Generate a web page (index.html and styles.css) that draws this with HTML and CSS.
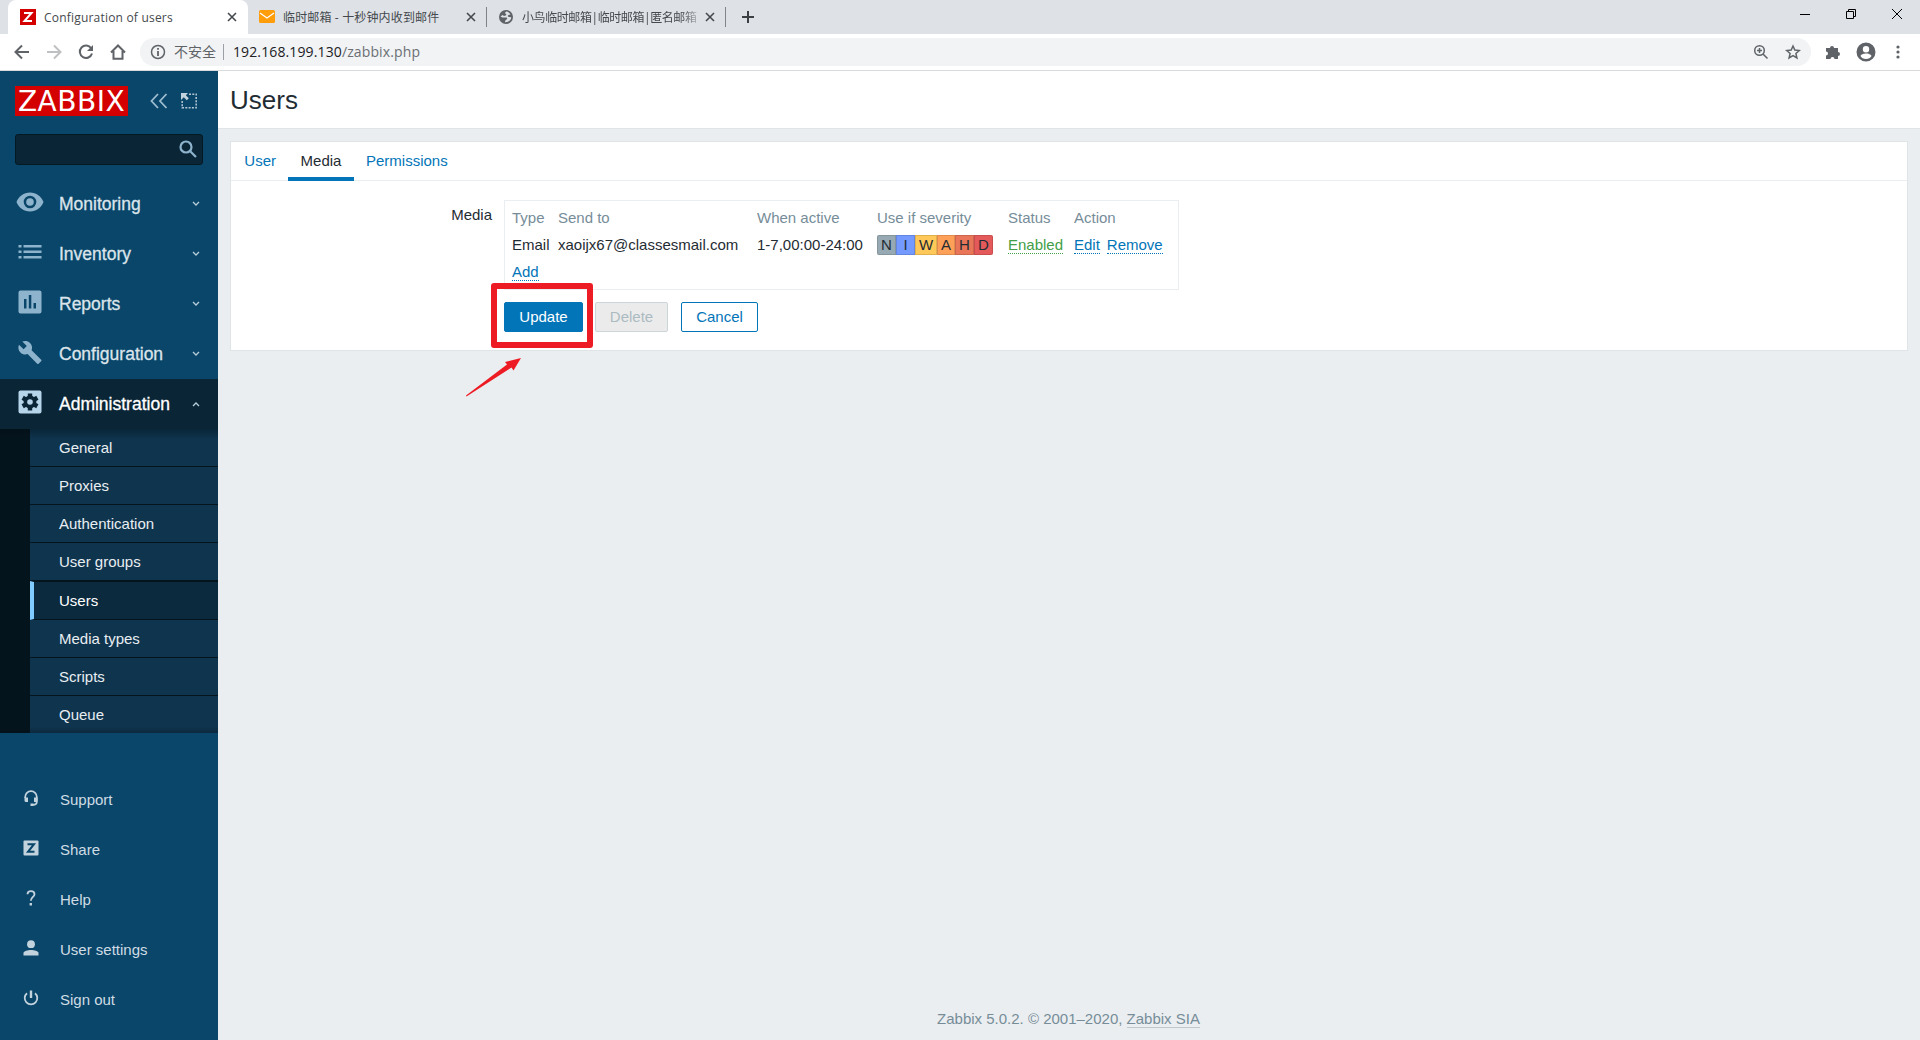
FILE: index.html
```html
<!DOCTYPE html>
<html lang="en">
<head>
    <meta charset="UTF-8">
    <title>Configuration of users</title>
    <link rel="stylesheet" href="styles.css">
</head>
<body>

    <!-- Browser tabs -->
    <div class="tabstrip">
        <div class="tab active">
            <svg class="favicon" width="16" height="16" viewBox="0 0 16 16"><path fill="#d40000" d="M0 0h16v16H0z"/><path fill="none" stroke="#fff" stroke-width="2" d="M4 4h7.5L4.5 12H12"/></svg>
            <span class="tab-title first-title">Configuration of users</span>
            <svg class="close" width="10" height="10" viewBox="0 0 10 10"><path d="M1 1l8 8M9 1L1 9"/></svg>
        </div>
        <div class="tab second">
            <svg class="favicon" width="16" height="16" viewBox="0 0 16 16"><rect y="1" width="16" height="13" rx="1.5" fill="#ff9d0a"/><path fill="none" stroke="#fff" stroke-width="1.3" d="M1 4l7 5 7-5"/></svg>
            <span class="tab-title second-title">临时邮箱 - 十秒钟内收到邮件</span>
            <svg class="close" width="10" height="10" viewBox="0 0 10 10"><path d="M1 1l8 8M9 1L1 9"/></svg>
        </div>
        <div class="tab third">
            <svg class="favicon" width="16" height="16" viewBox="0 0 16 16"><circle cx="8" cy="8" r="7" fill="#5f6368"/><path fill="#dee1e6" d="M8.500 2.500C7 3 6.500 4.500 8 5c1.200.5-.5 2-2 2L4.500 6 2.500 7.500C3.500 8.500 5 8.500 6 8.500h2c1.500 0 1.500 1.500.5 2s-1.500 1-1.500 2.800c3.500.2 6-2 6.300-5L11 8C9.500 8 9.500 6.500 10.500 6l2-.5C11.500 3.800 10.200 2.800 8.500 2.500z"/></svg>
            <span class="tab-title faded">小鸟临时邮箱|临时邮箱|匿名邮箱</span>
            <svg class="close" width="10" height="10" viewBox="0 0 10 10"><path d="M1 1l8 8M9 1L1 9"/></svg>
        </div>
        <svg class="new-tab" width="12" height="12" viewBox="0 0 12 12"><path d="M6 0v12M0 6h12"/></svg>
        <div class="window-buttons">
            <svg width="12" height="12" viewBox="0 0 12 12"><path d="M1 6.500h10"/></svg>
            <svg width="12" height="12" viewBox="0 0 12 12"><path d="M1.500 3.500h7v7h-7zM3.500 3.500v-2h7v7h-2"/></svg>
            <svg width="12" height="12" viewBox="0 0 12 12"><path d="M1 1l10 10M11 1L1 11"/></svg>
        </div>
    </div>

    <!-- Browser toolbar -->
    <div class="toolbar">
        <svg width="16" height="16" viewBox="0 0 16 16"><path class="line" d="M15 8H2M8 1.500L1.500 8 8 14.500"/></svg>
        <svg class="disabled" width="16" height="16" viewBox="0 0 16 16"><path class="line" d="M1 8h13M8 1.500L14.500 8 8 14.500"/></svg>
        <svg width="16" height="16" viewBox="0 0 16 16"><path class="line" d="M13.200 4.300A6.200 6.200 0 1 0 14 9.500"/><path d="M15 1v6H9z"/></svg>
        <svg width="16" height="16" viewBox="0 0 16 16"><path class="line" d="M1 8.500L8 1.500l7 7M3.500 7v7.800h9V7"/></svg>
        <div class="address">
            <svg width="16" height="16" viewBox="0 0 16 16"><circle class="thin" cx="8" cy="8" r="6.500"/><path d="M7.100 7h1.800v5H7.100zM7.100 4h1.800v1.800H7.100z"/></svg>
            <span class="insecure">不安全</span>
            <span class="url">192.168.199.130<i>/zabbix.php</i></span>
            <svg class="magnify" width="16" height="16" viewBox="0 0 16 16"><circle class="thin" cx="6.500" cy="6.500" r="4.800"/><path class="thin" d="M10 10l4.500 4.500M4 6.500h5M6.500 4v5"/></svg>
            <svg width="16" height="16" viewBox="0 0 16 16"><path class="thin" d="M8 2l1.800 4.100 4.500.4-3.400 3 1 4.400L8 11.600l-3.900 2.300 1-4.400-3.400-3 4.500-.4z"/></svg>
        </div>
        <svg class="puzzle" width="16" height="16" viewBox="0 0 16 16"><path d="M1 4h4a2 2 0 1 1 4 0h4v4a2 2 0 1 1 0 4v3H9.500a2 2 0 0 0-4 0H1v-3.500a2 2 0 0 0 0-4z"/></svg>
        <svg class="profile" width="20" height="20" viewBox="0 0 20 20"><path fill-rule="evenodd" d="M10 .5a9.500 9.500 0 1 0 0 19 9.500 9.500 0 0 0 0-19zm0 3.500a3.200 3.200 0 1 1 0 6.400A3.200 3.200 0 0 1 10 4zm0 13c-2.500 0-4.500-1.200-5.500-3 .3-1.800 3.500-2.600 5.500-2.600s5.200.8 5.500 2.600c-1 1.800-3 3-5.500 3z"/></svg>
        <svg width="16" height="16" viewBox="0 0 16 16"><circle cx="8" cy="3" r="1.600"/><circle cx="8" cy="8" r="1.600"/><circle cx="8" cy="13" r="1.600"/></svg>
    </div>

    <div class="page">

        <!-- Sidebar -->
        <aside class="sidebar">
            <div class="sidebar-header">
                <div class="logo">ZABBIX</div>
                <svg class="collapse" width="18" height="16" viewBox="0 0 18 16"><path d="M8 1L1.500 8 8 15M16.500 1L10 8l6.500 7"/></svg>
                <svg class="kiosk" width="16" height="16" viewBox="0 0 16 16"><path class="dots" d="M8 1.200h7.200v13.600H1.200V8"/><path class="arrow" d="M0 0h7L4.800 2.200l3 3-2 2-3-3L0 7z"/></svg>
            </div>
            <div class="search">
                <svg width="18" height="18" viewBox="0 0 18 18"><circle cx="7" cy="7" r="5.500"/><path d="M11 11l6 6"/></svg>
            </div>
            <ul class="menu">
                <li>
                    <svg class="icon" width="28" height="28" viewBox="0 0 28 28"><path fill-rule="evenodd" d="M14 4.500C7.800 4.500 2.500 8.400.5 14c2 5.600 7.300 9.500 13.500 9.500S25.500 19.600 27.500 14C25.500 8.400 20.200 4.500 14 4.500zm0 3.200a6.300 6.300 0 1 1 0 12.600 6.300 6.300 0 0 1 0-12.600z"/><circle cx="14" cy="14" r="3.800"/></svg>
                    <span>Monitoring</span>
                    <svg class="caret" width="8" height="6" viewBox="0 0 8 6"><path d="M1 1l3 3 3-3"/></svg>
                </li>
                <li>
                    <svg class="icon" width="28" height="28" viewBox="0 0 28 28"><path d="M2.500 7h3v2.500h-3zM7.500 7h18v2.500h-18zM2.500 12.500h3V15h-3zM7.500 12.500h18V15h-18zM2.500 18h3v2.500h-3zM7.500 18h18v2.500h-18z"/></svg>
                    <span>Inventory</span>
                    <svg class="caret" width="8" height="6" viewBox="0 0 8 6"><path d="M1 1l3 3 3-3"/></svg>
                </li>
                <li>
                    <svg class="icon" width="28" height="28" viewBox="0 0 28 28"><path fill-rule="evenodd" d="M4.500 2.500h19a2 2 0 0 1 2 2v19a2 2 0 0 1-2 2h-19a2 2 0 0 1-2-2v-19a2 2 0 0 1 2-2zM8 11v9.500h2.500V11zM12.800 7v13.500h2.500V7zM17.500 15v5.500H20V15z"/></svg>
                    <span>Reports</span>
                    <svg class="caret" width="8" height="6" viewBox="0 0 8 6"><path d="M1 1l3 3 3-3"/></svg>
                </li>
                <li>
                    <svg class="icon" width="28" height="28" viewBox="0 0 28 28"><path d="M25.200 21.800l-9.600-9.600c1-2.400.4-5.300-1.600-7.200C11.900 2.900 8.800 2.500 6.300 3.600l4.500 4.500-3.200 3.200-4.600-4.500C1.800 9.300 2.300 12.400 4.400 14.500c2 2 4.800 2.500 7.200 1.600l9.600 9.600c.4.400 1 .4 1.400 0l2.500-2.400c.5-.4.500-1.100.1-1.500z"/></svg>
                    <span>Configuration</span>
                    <svg class="caret" width="8" height="6" viewBox="0 0 8 6"><path d="M1 1l3 3 3-3"/></svg>
                </li>
                <li class="open">
                    <svg class="icon" width="28" height="28" viewBox="0 0 28 28"><rect x="2.500" y="2.500" width="23" height="23" rx="2"/><g class="gear"><path d="M11.800 5.500h4.400v17h-4.400z"/><path d="M11.800 5.500h4.400v17h-4.400z" transform="rotate(60 14 14)"/><path d="M11.800 5.500h4.400v17h-4.400z" transform="rotate(120 14 14)"/><circle cx="14" cy="14" r="6.400"/></g><circle cx="14" cy="14" r="2.800"/></svg>
                    <span>Administration</span>
                    <svg class="caret" width="8" height="6" viewBox="0 0 8 6"><path d="M1 5l3-3 3 3"/></svg>
                </li>
            </ul>
            <ul class="submenu">
                <li>General</li>
                <li>Proxies</li>
                <li>Authentication</li>
                <li>User groups</li>
                <li class="selected">Users</li>
                <li>Media types</li>
                <li>Scripts</li>
                <li>Queue</li>
            </ul>
            <ul class="user-menu">
                <li>
                    <svg width="16" height="16" viewBox="0 0 16 16"><path class="stroke" d="M2.200 8V7a5.800 5.800 0 0 1 11.600 0v5c0 2-1.500 2.800-4 2.800"/><path d="M1.500 7.500H5V12H3a1.500 1.500 0 0 1-1.500-1.500zM11 7.500h3.500v3A1.500 1.500 0 0 1 13 12h-2zM7.500 13.500h3V16h-3z"/></svg>
                    <span>Support</span>
                </li>
                <li>
                    <svg width="16" height="16" viewBox="0 0 16 16"><rect x=".5" y=".5" width="15" height="15" rx="1"/><path class="zed" d="M4.500 4.200H11L5 11.800h6.500"/></svg>
                    <span>Share</span>
                </li>
                <li>
                    <svg width="16" height="16" viewBox="0 0 16 16"><path class="stroke" d="M4.500 4.200C4.500 2.200 6 1.200 8 1.200s3.500 1.200 3.500 3c0 2.600-3.700 3-3.700 6.600"/><path d="M6.600 13h2.400v2.500H6.600z"/></svg>
                    <span>Help</span>
                </li>
                <li>
                    <svg width="16" height="16" viewBox="0 0 16 16"><circle cx="8" cy="4.200" r="3.900"/><path d="M.5 15.500V13c0-2 4.500-3 7.500-3s7.500 1 7.500 3v2.500z"/></svg>
                    <span>User settings</span>
                </li>
                <li>
                    <svg width="16" height="16" viewBox="0 0 16 16"><path class="stroke" d="M4 3.200a6.300 6.300 0 1 0 8 0"/><path d="M6.800.5h2.400v7.500H6.800z"/></svg>
                    <span>Sign out</span>
                </li>
            </ul>
        </aside>

        <!-- Content -->
        <main>
            <header>
                <h1>Users</h1>
            </header>
            <div class="card">
                <nav>
                    <a>User</a>
                    <a class="current">Media</a>
                    <a>Permissions</a>
                </nav>
                <div class="form-row">
                    <label>Media</label>
                    <div class="media-box">
                        <table>
                            <tr>
                                <th class="col-type">Type</th>
                                <th class="col-sendto">Send to</th>
                                <th class="col-when">When active</th>
                                <th class="col-severity">Use if severity</th>
                                <th class="col-status">Status</th>
                                <th>Action</th>
                            </tr>
                            <tr>
                                <td>Email</td>
                                <td>xaoijx67@classesmail.com</td>
                                <td>1-7,00:00-24:00</td>
                                <td><div class="severity"><span class="na">N</span><span class="info">I</span><span class="warning">W</span><span class="average">A</span><span class="high">H</span><span class="disaster">D</span></div></td>
                                <td><a class="link green">Enabled</a></td>
                                <td><a class="link edit">Edit</a><a class="link">Remove</a></td>
                            </tr>
                            <tr>
                                <td colspan="6"><a class="link">Add</a></td>
                            </tr>
                        </table>
                    </div>
                </div>
                <div class="buttons">
                    <div class="update-wrap">
                        <button class="update">Update</button>
                        <div class="highlight"></div>
                        <svg class="pointer" width="58" height="40" viewBox="0 0 58 40"><path d="M1 38.500L42 7.500l-2-2.500L56 1 48.500 13.500l-2-3L1.500 39.500z"/></svg>
                    </div>
                    <button class="delete" disabled>Delete</button>
                    <button class="cancel">Cancel</button>
                </div>
            </div>
            <footer>
                Zabbix 5.0.2. © 2001–2020, <a>Zabbix SIA</a>
            </footer>
        </main>
    </div>

</body>
</html>
```
FILE: styles.css
```css
* {
    box-sizing: border-box;
}

body {
    margin: 0;
    height: 1040px;
    overflow: hidden;
    font-family: "Liberation Sans", Arial, sans-serif;
    font-size: 15px;
    color: #1f2c33;
}

svg {
    display: block;
    flex: none;
}

ul {
    list-style: none;
    margin: 0;
    padding: 0;
}

/* Browser tabs */
.tabstrip {
    display: flex;
    height: 34px;
    padding-left: 8px;
    background: #dee1e6;
    font-family: "Open Sans", "Noto Sans CJK SC", sans-serif;
    font-size: 12px;
    color: #45494d;
}

.tab {
    display: flex;
    align-items: center;
    height: 34px;
}

.tab.active {
    width: 240px;
    padding: 0 11px 0 12px;
    background: #fff;
    border-radius: 8px 8px 0 0;
}

.tab.second {
    width: 239px;
    padding: 0 11px;
}

.tab.third {
    width: 239px;
    padding: 0 11px;
}

.tab.second,
.tab.third {
    background: linear-gradient(#808387, #808387) right center / 1px 20px no-repeat;
}

.favicon {
    margin-right: 8px;
}

.tab-title {
    flex: 1;
    padding-top: 2px;
    white-space: nowrap;
    line-height: 20px;
}

.first-title {
    letter-spacing: 0.2px;
}

.second-title {
    letter-spacing: 0.15px;
}

.faded {
    margin-right: 8px;
    letter-spacing: -0.42px;
    -webkit-mask-image: linear-gradient(to right, #000 91%, rgba(0, 0, 0, 0.3));
    mask-image: linear-gradient(to right, #000 91%, rgba(0, 0, 0, 0.3));
}

.close,
.new-tab {
    fill: none;
    stroke: #45494d;
    stroke-width: 1.6;
}

.new-tab {
    margin: 11px 0 0 16px;
    stroke: #3c4043;
    stroke-width: 2;
}

.window-buttons {
    display: flex;
    gap: 34px;
    margin: 8px 17px 0 auto;
    fill: none;
    stroke: #000;
}

/* Browser toolbar */
.toolbar {
    display: flex;
    align-items: center;
    height: 37px;
    padding: 0 14px;
    background: #fff;
    border-bottom: 1px solid #d9dadc;
    fill: #5f6368;
}

.toolbar > svg {
    margin-right: 16px;
}

.toolbar > svg:last-child {
    margin-right: 0;
}

.toolbar .line {
    fill: none;
    stroke: #5f6368;
    stroke-width: 2;
}

.toolbar .thin {
    fill: none;
    stroke: #5f6368;
    stroke-width: 1.5;
}

.toolbar .disabled {
    opacity: 0.4;
}

.toolbar .address {
    display: flex;
    flex: 1;
    align-items: center;
    height: 28px;
    margin: 0 14px 0 -2px;
    padding: 0 10px;
    background: #f1f3f4;
    border-radius: 14px;
    font-family: "Open Sans", "Noto Sans CJK SC", sans-serif;
    font-size: 14px;
}

.insecure {
    margin-left: 8px;
    padding-right: 7px;
    border-right: 1px solid #9aa0a6;
    line-height: 16px;
    color: #5f6368;
}

.url {
    margin-left: 9px;
    padding-bottom: 1px;
    letter-spacing: 0.12px;
    color: #202124;
}

.url i {
    font-style: normal;
    color: #6b6f74;
}

.magnify {
    margin: 0 16px 0 auto;
}

.toolbar .puzzle {
    margin-right: 15px;
}

.toolbar .profile {
    margin-right: 14px;
}

.page {
    display: flex;
    height: 969px;
}

/* Sidebar */
.sidebar {
    width: 218px;
    background: #0a466a;
    color: #dbe4ea;
}

.sidebar-header {
    display: flex;
    align-items: center;
    height: 30px;
    margin: 15px 15px 0;
}

.logo {
    width: 113px;
    height: 30px;
    background: #d40000;
    color: #fff;
    font-family: "DejaVu Sans", sans-serif;
    font-size: 28px;
    line-height: 31px;
    letter-spacing: 0.5px;
    text-align: center;
}

.collapse {
    margin-left: 22px;
    fill: none;
    stroke: #9dbdd0;
    stroke-width: 1.8;
}

.kiosk {
    margin-left: 13px;
}

.kiosk .dots {
    fill: none;
    stroke: #b5cad6;
    stroke-width: 1.5;
    stroke-dasharray: 2 1.300;
}

.kiosk .arrow {
    fill: #c3d3dd;
}

.search {
    display: flex;
    justify-content: flex-end;
    width: 188px;
    height: 31px;
    margin: 18px 15px 14px;
    padding: 5px 5px 0 0;
    background: #0a2536;
    border: 1px solid #051923;
    border-radius: 3px;
}

.search svg {
    fill: none;
    stroke: #8eb3cc;
    stroke-width: 2.2;
}

.menu li {
    display: flex;
    align-items: center;
    height: 50px;
    padding: 0 18px 0 15.5px;
    font-size: 17.5px;
    -webkit-text-stroke: 0.3px currentColor;
}

.menu .icon {
    margin: -4px 15.5px 0 0;
    fill: #8eb3cc;
}

.menu .caret {
    margin: 0 0 0 auto;
    fill: none;
    stroke: #b9cedb;
    stroke-width: 1.3;
}

.menu .open {
    background: #0a2536;
    color: #fff;
}

.menu .open .icon {
    fill: #b6d5ea;
}

.menu .gear {
    fill: #0a2536;
}

.submenu {
    height: 304px;
    padding-left: 30px;
    background:
        linear-gradient(rgba(0, 10, 18, 0.35), transparent 10px, transparent 298px, rgba(0, 10, 18, 0.25)),
        linear-gradient(to right, #04141d 30px, transparent 30px),
        #0f344d;
    color: #e8eef2;
}

.submenu li {
    height: 38px;
    padding-left: 29px;
    border-bottom: 1px solid #04141d;
    line-height: 37px;
}

.submenu li:last-child {
    height: 37px;
    border-bottom: 0;
}

.submenu .selected {
    height: 39px;
    padding-left: 25px;
    background: #0b2a3e;
    border-left: 4px solid #80cbff;
    border-top: 1px solid #04141d;
    color: #fff;
}

.user-menu {
    margin-top: 41px;
}

.user-menu li {
    display: flex;
    align-items: center;
    height: 50px;
    padding-left: 22.5px;
    color: #cfdce4;
}

.user-menu svg {
    margin: -2px 21.5px 0 0;
    fill: #c3d3dd;
}

.user-menu .stroke {
    fill: none;
    stroke: #c3d3dd;
    stroke-width: 1.8;
}

.user-menu .zed {
    fill: none;
    stroke: #0a466a;
    stroke-width: 2;
}

/* Content */
main {
    display: flex;
    flex-direction: column;
    flex: 1;
    background: #ebeef0;
}

header {
    height: 58px;
    padding-left: 12px;
    background: #fff;
    border-bottom: 1px solid #dfe4e7;
}

h1 {
    margin: 0;
    font-size: 26px;
    font-weight: normal;
    line-height: 58px;
}

.card {
    height: 210px;
    margin: 12px 12px 0;
    background: #fff;
    border: 1px solid #dfe4e7;
}

nav {
    display: flex;
    height: 39px;
    padding-left: 1px;
    border-bottom: 1px solid #ebeef0;
}

nav a {
    height: 39px;
    padding: 0 12.3px;
    line-height: 37px;
    color: #0275b8;
}

nav .current {
    border-bottom: 4px solid #0275b8;
    color: #1f2c33;
}

.form-row {
    display: flex;
    margin-top: 19px;
}

.form-row label {
    width: 261px;
    margin-right: 12px;
    line-height: 30px;
    text-align: right;
}

.media-box {
    width: 675px;
    height: 90px;
    padding: 3px 7px;
    border: 1px solid #ebeef0;
}

table {
    border-collapse: collapse;
    white-space: nowrap;
}

th,
td {
    height: 27px;
    padding: 0;
    text-align: left;
}

th {
    font-weight: normal;
    color: #768d99;
}

.col-type {
    width: 46px;
}

.col-sendto {
    width: 199px;
}

.col-when {
    width: 120px;
}

.col-severity {
    width: 131px;
}

.col-status {
    width: 66px;
}

.link {
    color: #0275b8;
    border-bottom: 1px dotted #0275b8;
}

.link.green {
    color: #429e47;
    border-color: #429e47;
}

.edit {
    margin-right: 7px;
}

.severity {
    display: flex;
    width: 116px;
    height: 20px;
    border-radius: 2px;
    line-height: 20px;
    text-align: center;
}

.severity span {
    width: 19px;
    box-shadow: inset 0 0 0 1px rgba(0, 0, 0, 0.12);
}

.severity .na {
    background: #97aab3;
    border-radius: 2px 0 0 2px;
}

.severity .info {
    background: #7499ff;
}

.severity .warning {
    width: 22px;
    background: #ffc859;
}

.severity .average {
    width: 18px;
    background: #ffa059;
}

.severity .high {
    background: #e97659;
}

.severity .disaster {
    background: #e45959;
    border-radius: 0 2px 2px 0;
}

.buttons {
    display: flex;
    margin: 12px 0 0 273px;
}

button {
    display: block;
    height: 30px;
    padding: 0 0 2px;
    border: 1px solid #0275b8;
    border-radius: 2px;
    font-family: inherit;
    font-size: 15px;
}

.update-wrap {
    position: relative;
    margin-right: 12px;
}

.update {
    width: 79px;
    background: #0275b8;
    color: #fff;
}

.delete {
    width: 73px;
    margin-right: 13px;
    background: #ebebeb;
    border-color: #ccd5d9;
    color: #acbbc2;
}

.cancel {
    width: 77px;
    background: #fff;
    color: #0275b8;
}

.highlight {
    position: absolute;
    left: -13px;
    top: -19px;
    width: 102px;
    height: 65px;
    border: 6px solid #ed1c24;
    border-radius: 3px;
}

.pointer {
    position: absolute;
    left: -39px;
    top: 55px;
    fill: #ed1c24;
}

footer {
    margin: auto 0 12px;
    padding-right: 1px;
    text-align: center;
    line-height: 18px;
    color: #768d99;
}

footer a {
    border-bottom: 1px solid #c0c8cc;
}
```
